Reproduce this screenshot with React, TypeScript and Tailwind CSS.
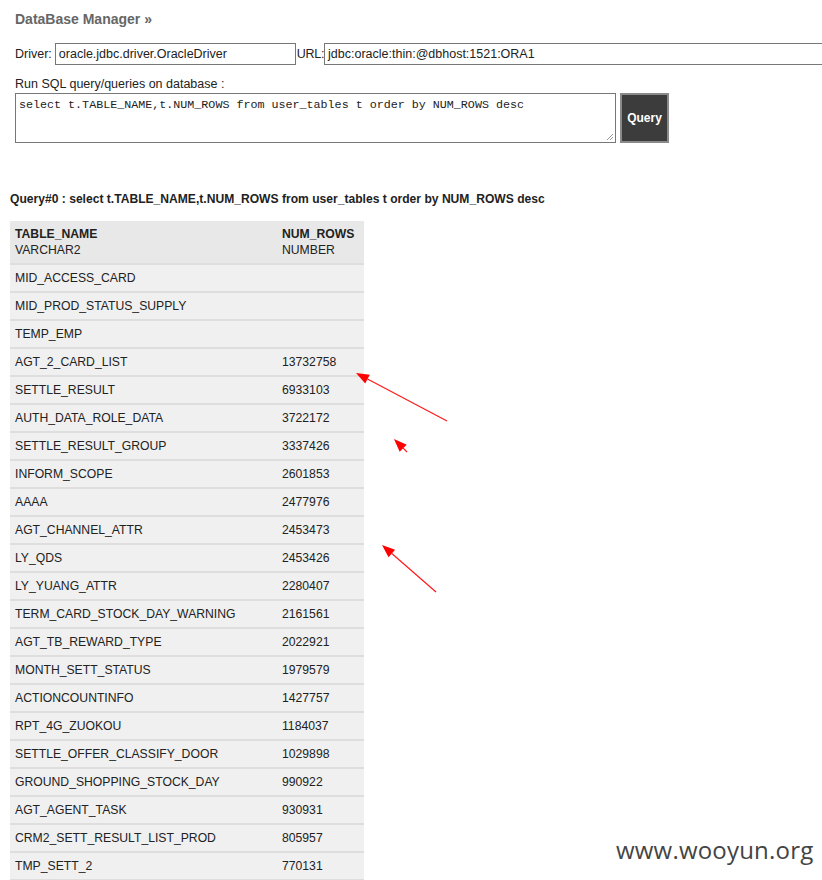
import React from "react";

const rows: [string, string][] = [
  ["MID_ACCESS_CARD", ""],
  ["MID_PROD_STATUS_SUPPLY", ""],
  ["TEMP_EMP", ""],
  ["AGT_2_CARD_LIST", "13732758"],
  ["SETTLE_RESULT", "6933103"],
  ["AUTH_DATA_ROLE_DATA", "3722172"],
  ["SETTLE_RESULT_GROUP", "3337426"],
  ["INFORM_SCOPE", "2601853"],
  ["AAAA", "2477976"],
  ["AGT_CHANNEL_ATTR", "2453473"],
  ["LY_QDS", "2453426"],
  ["LY_YUANG_ATTR", "2280407"],
  ["TERM_CARD_STOCK_DAY_WARNING", "2161561"],
  ["AGT_TB_REWARD_TYPE", "2022921"],
  ["MONTH_SETT_STATUS", "1979579"],
  ["ACTIONCOUNTINFO", "1427757"],
  ["RPT_4G_ZUOKOU", "1184037"],
  ["SETTLE_OFFER_CLASSIFY_DOOR", "1029898"],
  ["GROUND_SHOPPING_STOCK_DAY", "990922"],
  ["AGT_AGENT_TASK", "930931"],
  ["CRM2_SETT_RESULT_LIST_PROD", "805957"],
  ["TMP_SETT_2", "770131"],
];

function Arrow({ x1, y1, x2, y2 }: { x1: number; y1: number; x2: number; y2: number }) {
  const dx = x2 - x1;
  const dy = y2 - y1;
  const len = Math.sqrt(dx * dx + dy * dy);
  const ux = dx / len;
  const uy = dy / len;
  const hl = 13;
  const hw = 5;
  const bx = x2 - ux * hl;
  const by = y2 - uy * hl;
  const px = -uy;
  const py = ux;
  return (
    <g>
      <line x1={x1} y1={y1} x2={bx} y2={by} stroke="#ff1a1a" strokeWidth={1.2} />
      <polygon
        points={`${x2},${y2} ${bx + px * hw},${by + py * hw} ${bx - px * hw},${by - py * hw}`}
        fill="#ff0000"
      />
    </g>
  );
}

export default function App() {
  return (
    <div className="relative w-[822px] h-[880px] overflow-hidden bg-white font-['Liberation_Sans',Arial,sans-serif] text-[#222]">
      <div className="pl-[15px] pt-[11px]">
        <div className="text-[14px] leading-[16px] font-bold text-[#666]">DataBase Manager »</div>
        <div className="mt-[16px] flex items-center text-[12.5px] whitespace-nowrap">
          <span>Driver:</span>
          <div className="ml-[3px] w-[241px] shrink-0 h-[22px] border border-[#777] pl-[3px] flex items-center bg-white">
            oracle.jdbc.driver.OracleDriver
          </div>
          <span className="ml-[1px] tracking-[-0.3px]">URL:</span>
          <div className="ml-0 w-[510px] shrink-0 h-[22px] border border-[#777] pl-[3px] flex items-center bg-white">
            jdbc:oracle:thin:@dbhost:1521:ORA1
          </div>
        </div>
        <div className="mt-[12px] text-[12.5px] leading-[14px]">Run SQL query/queries on database :</div>
        <div className="mt-[2px] flex">
          <div className="relative w-[601px] h-[50px] border border-[#777] bg-white px-[3px] pt-[4px] font-['Liberation_Mono','Courier_New',monospace] text-[11.7px] leading-[14px] text-[#222] whitespace-pre">
            select t.TABLE_NAME,t.NUM_ROWS from user_tables t order by NUM_ROWS desc
            <svg className="absolute right-[1px] bottom-[1px]" width="9" height="9" viewBox="0 0 9 9">
              <line x1="2" y1="8" x2="8" y2="2" stroke="#999" strokeWidth="1" />
              <line x1="5" y1="8" x2="8" y2="5" stroke="#999" strokeWidth="1" />
            </svg>
          </div>
          <button className="ml-[4px] w-[49px] h-[50px] bg-[#3c3c3c] border-2 border-[#8a8a8a] text-white text-[12px] font-bold flex items-center justify-center">
            Query
          </button>
        </div>
      </div>
      <div className="pl-[10px]">
        <div className="mt-[49px] text-[12.1px] leading-[14px] font-bold text-[#222]">
          Query#0 : select t.TABLE_NAME,t.NUM_ROWS from user_tables t order by NUM_ROWS desc
        </div>
        <div className="mt-[15px] w-[354px] text-[12.2px] text-[#222]">
          <div className="flex h-[44px] bg-[#e8e8e8] pt-[5px] leading-[16px] border-b-2 border-[#dedede]">
            <div className="w-[267px] pl-[5px]">
              <div className="font-bold">TABLE_NAME</div>
              <div>VARCHAR2</div>
            </div>
            <div className="pl-[5px]">
              <div className="font-bold">NUM_ROWS</div>
              <div>NUMBER</div>
            </div>
          </div>
          {rows.map(([name, num]) => (
            <div key={name} className="flex h-[28px] items-center bg-[#f0f0f0] border-b-2 border-[#dedede]">
              <div className="w-[267px] pl-[5px]">{name}</div>
              <div className="pl-[5px]">{num}</div>
            </div>
          ))}
        </div>
      </div>
      <svg className="absolute left-0 top-0 pointer-events-none" width="822" height="880">
        <Arrow x1={447} y1={421} x2={356} y2={373} />
        <Arrow x1={407} y1={452} x2={394} y2={439} />
        <Arrow x1={436} y1={592} x2={382} y2={545} />
      </svg>
      <div className="absolute left-[616px] top-[834px] font-['Open_Sans',sans-serif] text-[24px] leading-[32px] text-[#444] tracking-[0.2px]">
        www.wooyun.org
      </div>
    </div>
  );
}
